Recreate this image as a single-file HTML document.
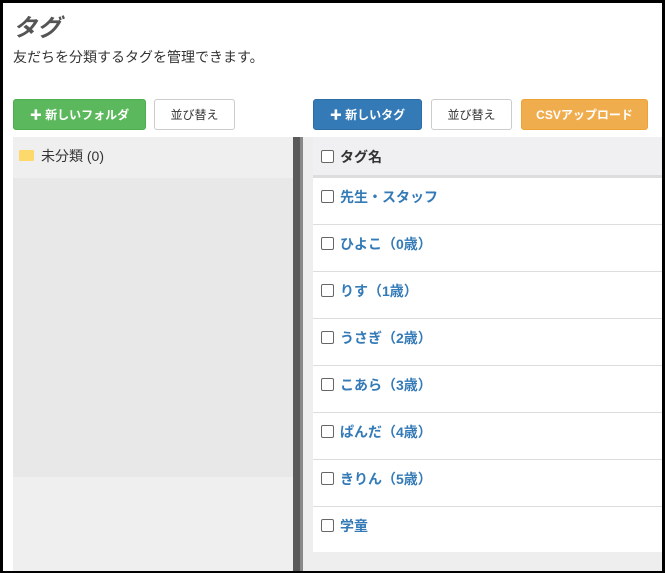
<!DOCTYPE html>
<html><head><meta charset="utf-8"><style>
*{box-sizing:border-box;margin:0;padding:0}
body{width:665px;height:573px;background:#000;font-family:"Liberation Sans","Noto Sans CJK JP",sans-serif;overflow:hidden;position:relative}
.frame{position:absolute;left:3px;top:3px;width:659px;height:568px;background:#fff;overflow:hidden}
.a{position:absolute}
h1{position:absolute;left:10px;top:5px;font-size:24px;font-weight:bold;color:#555;font-style:italic}
.sub{left:10px;top:44px;font-size:14px;color:#333}
.btn{position:absolute;top:96px;height:31px;border-radius:3px;font-size:12px;display:flex;align-items:center;justify-content:center;border:1px solid #ccc;background:#fff;color:#333}
.g{background:#5cb85c;border-color:#4cae4c;color:#fff;font-weight:bold}
.b{background:#337ab7;border-color:#2e6da4;color:#fff;font-weight:bold}
.o{background:#f0ad4e;border-color:#eea236;color:#fff;font-weight:bold}
.cb{display:inline-block;width:13px;height:13px;border:1px solid #666;border-radius:2px;background:#fff;vertical-align:-1px;margin-right:6px}
.row{position:absolute;left:310px;width:349px;height:47px;border-bottom:1px solid #ddd;background:#fff;padding:9px 0 0 8px;font-size:14px;font-weight:bold;color:#337ab7}
</style></head><body><div class="frame">
<h1>タグ</h1>
<div class="a sub">友だちを分類するタグを管理できます。</div>
<div class="btn g" style="left:10px;width:133px">✚ 新しいフォルダ</div>
<div class="btn" style="left:151px;width:81px">並び替え</div>
<div class="btn b" style="left:310px;width:109px">✚ 新しいタグ</div>
<div class="btn" style="left:428px;width:81px">並び替え</div>
<div class="btn o" style="left:518px;width:127px">CSVアップロード</div>
<div class="a" style="left:10px;top:134px;width:280px;height:434px;background:#efefef"></div>
<div class="a" style="left:10px;top:175px;width:280px;height:299px;background:#e8e8e8"></div>
<div class="a" style="left:16px;top:147px;width:15px;height:11px;background:#fdd96b;border-radius:1px"></div>
<div class="a" style="left:38px;top:143px;font-size:14px;color:#333">未分類 (0)</div>
<div class="a" style="left:290px;top:134px;width:7px;height:434px;background:#5a5a5a"></div>
<div class="a" style="left:297px;top:134px;width:3px;height:434px;background:#888"></div>
<div class="a" style="left:300px;top:134px;width:359px;height:434px;background:#eee"></div>
<div class="a" style="left:310px;top:134px;width:349px;height:38px;background:#f0f0f2;padding:10px 0 0 8px;font-size:14px;font-weight:bold;color:#333"><span class="cb"></span>タグ名</div>
<div class="a" style="left:310px;top:172px;width:349px;height:3px;background:#ddd"></div>
<div class="row" style="top:175px"><span class="cb"></span>先生・スタッフ</div>
<div class="row" style="top:222px"><span class="cb"></span>ひよこ（0歳）</div>
<div class="row" style="top:269px"><span class="cb"></span>りす（1歳）</div>
<div class="row" style="top:316px"><span class="cb"></span>うさぎ（2歳）</div>
<div class="row" style="top:363px"><span class="cb"></span>こあら（3歳）</div>
<div class="row" style="top:410px"><span class="cb"></span>ぱんだ（4歳）</div>
<div class="row" style="top:457px"><span class="cb"></span>きりん（5歳）</div>
<div class="row" style="top:504px;height:45px;border:none"><span class="cb"></span>学童</div>
</div></body></html>
